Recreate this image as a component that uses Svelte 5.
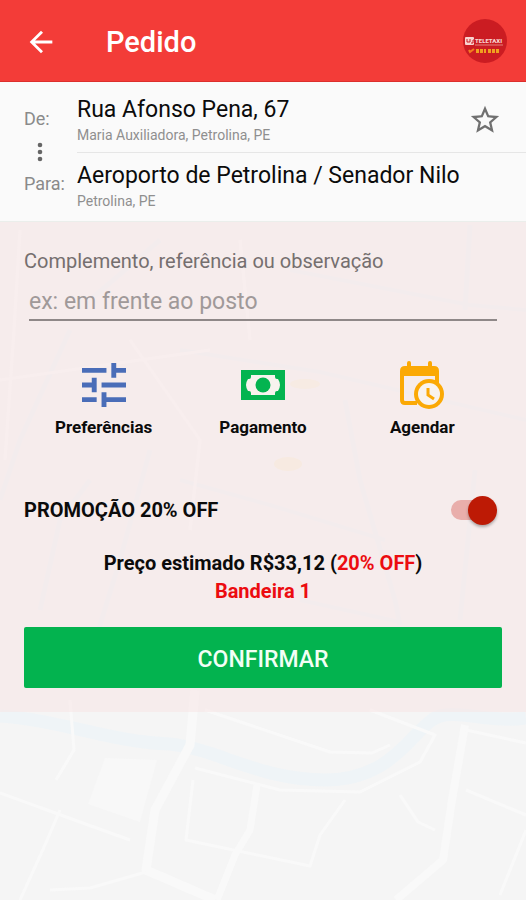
<script>
  let note = $state("")
  let promo = $state(true)
  let favorite = $state(false)

  const from = { name: "Rua Afonso Pena, 67", area: "Maria Auxiliadora, Petrolina, PE" }
  const to = { name: "Aeroporto de Petrolina / Senador Nilo", area: "Petrolina, PE" }
</script>

<div class="screen">
  <svg class="map" viewBox="0 0 526 900" preserveAspectRatio="xMidYMin slice" fill="none" aria-hidden="true">
    <g stroke="#eff4f7">
      <path d="M0 716C60 720 110 742 170 744C220 750 260 780 325 780C390 780 410 735 432 720C450 706 490 724 526 718" stroke-width="13" />
      <path d="M160 240L90 300M70 330L20 440L0 500M90 480L60 520L40 610M150 450L120 560L80 690" stroke-width="5" />
      <path d="M290 270L470 305L526 310M180 350L320 372L526 420M180 480L270 505L385 540M300 600L400 622" stroke-width="4" />
      <path d="M345 400L360 480L395 600L400 625M470 225L465 310M475 470L460 620" stroke-width="5" />
    </g>
    <g stroke="#f9f9f9" stroke-width="3" stroke-linejoin="round">
      <path d="M195 690L190 745L155 810L146 870L215 900" stroke-width="9" />
      <path d="M465 725L452 800L443 860L396 900" stroke-width="8" />
      <path d="M257 785L250 830L235 855L217 900" stroke-width="7" />
      <path d="M205 710L330 752L372 753L390 745M70 700L74 750L56 780M0 793L80 822L130 840" />
      <path d="M195 768L280 790L360 792L420 762L435 735L370 710M400 795L418 822L435 830M466 790L526 815M466 730L526 743" />
      <path d="M20 900L45 845L60 810M50 890L90 888L146 872M526 830L500 895M193 780L186 840L310 866L320 835L345 800" />
      <path d="M20 230L14 330L5 460M130 340L200 440L190 530M0 380L210 350M240 240L250 340" />
    </g>
    <path d="M105 758L157 760L140 822L88 804Z" fill="#f8f8f8" />
    <ellipse cx="288" cy="464" rx="14" ry="7" fill="#f6f1de" />
    <ellipse cx="305" cy="384" rx="15" ry="5" fill="#f6f2e2" />
  </svg>

  <header>
    <button class="icon-btn" aria-label="Voltar">
      <svg width="34" height="34" viewBox="0 0 24 24" fill="#fff">
        <path d="M20 11H7.83l5.59-5.59L12 4l-8 8 8 8 1.41-1.41L7.83 13H20v-2z" />
      </svg>
    </button>
    <h1>Pedido</h1>
    <svg class="logo" width="46" height="46" viewBox="0 0 46 46" role="img" aria-label="Teletaxi">
      <circle cx="23" cy="22" r="22" fill="#cb1c22" />
      <rect x="3" y="18" width="9" height="8" rx="1" fill="#f8d3cf" />
      <path d="M5 20v3h3v-3M9 24h2v-3h1" fill="none" stroke="#cb1c22" />
      <text x="13" y="24" font-size="6" font-weight="900" fill="#f8d3cf">TELETAXI</text>
      <path d="M13 26h28" stroke="#e4807c" />
      <path d="M7 31l1 2 4-3" fill="none" stroke="#f47b20" stroke-width="2" />
      <path d="M14 32h10M26 32h12" stroke="#f0a020" stroke-width="4" stroke-dasharray="3 1" />
    </svg>
  </header>

  <section class="route">
    <div class="labels">
      <span>De:</span>
      <svg width="32" height="20" viewBox="0 0 32 20" fill="#666" aria-hidden="true">
        <circle cx="16" cy="3" r="2.3" />
        <circle cx="16" cy="10" r="2.3" />
        <circle cx="16" cy="17" r="2.3" />
      </svg>
      <span>Para:</span>
    </div>
    <div class="stops">
      <div class="stop first">
        <div>
          <p class="name">{from.name}</p>
          <p class="area">{from.area}</p>
        </div>
        <button class="icon-btn" aria-label="Favoritar" aria-pressed={favorite} onclick={() => (favorite = !favorite)}>
          <svg width="34" height="34" viewBox="0 0 24 24" fill="#707070">
            {#if favorite}
              <path d="M12 17.27L18.18 21l-1.64-7.03L22 9.24l-7.19-.61L12 2 9.19 8.63 2 9.24l5.46 4.73L5.82 21z" />
            {:else}
              <path d="M22 9.24l-7.19-.62L12 2 9.19 8.63 2 9.24l5.46 4.73L5.82 21 12 17.27 18.18 21l-1.63-7.03L22 9.24zM12 15.4l-3.76 2.27 1-4.28-3.32-2.88 4.38-.38L12 6.1l1.71 4.04 4.38.38-3.32 2.88 1 4.28L12 15.4z" />
            {/if}
          </svg>
        </button>
      </div>
      <div class="stop">
        <div>
          <p class="name">{to.name}</p>
          <p class="area">{to.area}</p>
        </div>
      </div>
    </div>
  </section>

  <main>
    <label class="note-label" for="note">Complemento, referência ou observação</label>
    <input id="note" class="note" type="text" bind:value={note} placeholder="ex: em frente ao posto" />

    <div class="options">
      <button class="option">
        <svg width="44" height="44" viewBox="3 3 18 18" fill="#4a6db8">
          <path d="M3 17v2h6v-2H3zM3 5v2h10V5H3zm10 16v-2h8v-2h-8v-2h-2v6h2zM7 9v2H3v2h4v2h2V9H7zm14 4v-2H11v2h10zm-6-4h2V7h4V5h-4V3h-2v6z" />
        </svg>
        Preferências
      </button>
      <button class="option">
        <svg width="44" height="44" viewBox="0 0 44 44">
          <path d="M0 7h44v30H0z" fill="#04b450" />
          <path d="M10 12h24v2q0 2 2 2h1q4 6 0 12h-1q-2 0-2 2v2H10v-2q0-2-2-2H7q-4-6 0-12h1q2 0 2-2z" fill="#f8f3ee" />
          <circle cx="22" cy="22" r="7.5" fill="#04b450" />
        </svg>
        Pagamento
      </button>
      <button class="option">
        <svg width="44" height="48" viewBox="0 0 44 48">
          <path d="M7 5V2q0-2 2-2t2 2v3h17V2q0-2 2-2t2 2v3h2q5 0 5 5v5H0v-5q0-5 5-5z" fill="#fba905" />
          <path d="M2 14v25q0 3 3 3h12M37 14v8" fill="none" stroke="#fba905" stroke-width="4" />
          <circle cx="29" cy="33" r="15" fill="#fba905" />
          <circle cx="29" cy="33" r="11" fill="#f9f3ee" />
          <path d="M28 27v7l6 4" fill="none" stroke="#fba905" stroke-width="3" />
        </svg>
        Agendar
      </button>
    </div>

    <label class="promo">
      PROMOÇÃO 20% OFF
      <input type="checkbox" role="switch" bind:checked={promo} />
    </label>

    <p class="price">
      Preço estimado R$33,12 (<span class="red">20% OFF</span>)<br />
      <span class="red">Bandeira 1</span>
    </p>

    <button class="confirm">CONFIRMAR</button>
  </main>
</div>

<style>
  :global(body) {
    margin: 0;
    background: #f5f5f5;
  }

  .screen {
    position: relative;
    min-height: 100vh;
    overflow: hidden;
    font-family: Roboto, "Liberation Sans", sans-serif;
    color: #0b0b0b;
  }

  .map {
    position: absolute;
    inset: 0;
    width: 100%;
    height: 100%;
    z-index: -1;
  }

  p,
  h1 {
    margin: 0;
  }

  button {
    border: none;
    background: none;
    padding: 0;
    font-family: inherit;
    color: inherit;
    cursor: pointer;
  }

  .icon-btn {
    display: flex;
  }

  header {
    display: flex;
    align-items: center;
    box-sizing: border-box;
    height: 82px;
    padding: 2px 18px 0 24px;
    background: #f33c38;
    border-bottom: 1px solid #dc2f2d;
    color: #fff;
  }

  h1 {
    flex: 1;
    margin-left: 48px;
    font-size: 29px;
    line-height: 36px;
    font-weight: 500;
  }

  .route {
    display: flex;
    background: #fafafa;
    border-bottom: 1px solid #ebeeeb;
  }

  .labels {
    display: flex;
    flex-direction: column;
    justify-content: space-between;
    box-sizing: border-box;
    width: 77px;
    padding: 24px 0 24px 24px;
    font-size: 18px;
    line-height: 26px;
    color: #8a8a8a;
  }

  .stops {
    flex: 1;
  }

  .stop {
    display: flex;
    align-items: center;
    justify-content: space-between;
    padding: 8px 24px 10px 0;
  }

  .first {
    padding: 13px 24px 7px 0;
    border-bottom: 1px solid #e6e6e6;
  }

  .name {
    font-size: 23px;
    line-height: 30px;
  }

  .area {
    font-size: 14px;
    line-height: 20px;
    color: #8f8f8f;
  }

  main {
    display: flex;
    flex-direction: column;
    padding: 24px;
    background: rgba(247, 228, 228, 0.5);
  }

  .note-label {
    font-size: 20px;
    line-height: 30px;
    color: #756f6f;
  }

  .note {
    margin: 5px 5px 0;
    padding: 2px 0 0;
    height: 36px;
    border: none;
    border-bottom: 2px solid #8f8888;
    border-radius: 0;
    background: none;
    font-family: inherit;
    font-size: 23px;
    color: #222;
    outline: none;
  }

  .note::placeholder {
    color: #a09999;
    opacity: 1;
  }

  .options {
    display: grid;
    grid-template-columns: repeat(3, 1fr);
    margin-top: 40px;
  }

  .option {
    display: flex;
    flex-direction: column;
    align-items: center;
    justify-content: space-between;
    height: 78px;
    font-size: 17px;
    line-height: 24px;
    font-weight: 700;
  }

  .option svg {
    height: 48px;
  }

  .promo {
    display: flex;
    align-items: center;
    justify-content: space-between;
    margin-top: 56px;
    padding-right: 5px;
    font-size: 20px;
    line-height: 30px;
    font-weight: 700;
  }

  .promo input {
    appearance: none;
    display: flex;
    align-items: center;
    width: 46px;
    height: 20px;
    margin: 0;
    border-radius: 10px;
    background: linear-gradient(#e9aeab, #e9aeab) 0 0 / 36px 20px no-repeat;
    cursor: pointer;
  }

  .promo input::before {
    content: "";
    width: 29px;
    height: 29px;
    flex: none;
    border-radius: 50%;
    background: #fafafa;
    box-shadow: 0 2px 3px rgba(0, 0, 0, 0.3);
  }

  .promo input:checked::before {
    margin-left: auto;
    background: #bd1a05;
  }

  .price {
    margin-top: 24px;
    font-size: 20px;
    line-height: 28px;
    font-weight: 700;
    text-align: center;
  }

  .red {
    color: #ec0c10;
  }

  .confirm {
    height: 61px;
    margin-top: 22px;
    padding-top: 4px;
    border-radius: 2px;
    background: #03b34f;
    color: #f2fff5;
    font-size: 23px;
    font-weight: 500;
  }
</style>
